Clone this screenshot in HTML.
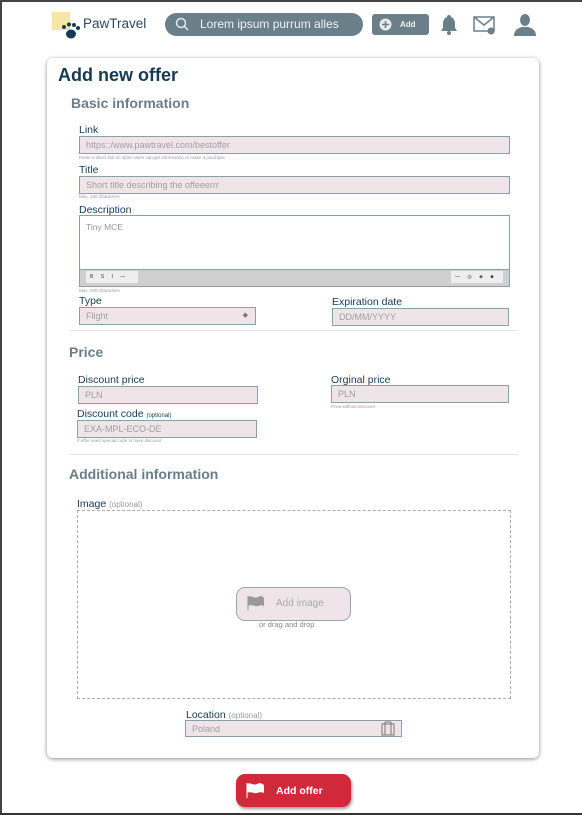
<!DOCTYPE html>
<html><head><meta charset="utf-8"><style>
*{box-sizing:border-box;margin:0;padding:0}
body{width:582px;height:815px;background:#fff;font-family:"Liberation Sans",sans-serif;position:relative;overflow:hidden}
.a{position:absolute}
.lbl{position:absolute;font-size:10.5px;color:#173a52}
.in{position:absolute;background:#efe5e8;border:1px solid #8d9eab;font-size:9px;color:#a0a0a0;padding:2px 6px;line-height:12px}
.hint{position:absolute;font-size:4.5px;color:#999}
.h2{position:absolute;font-size:14px;color:#6b7d89;font-weight:bold}
.hr{position:absolute;height:1px;background:#e6e6e6}
.opt{font-size:6px;color:#173a52}
.opt2{font-size:8px;color:#999}
</style></head><body>
<div class="a" style="left:0;top:0;width:582px;height:2px;background:#444"></div>
<div class="a" style="left:0;top:0;width:2px;height:815px;background:#444"></div>
<div class="a" style="left:0;top:813px;width:582px;height:2px;background:#333"></div>
<!-- header -->
<div class="a" style="left:52px;top:12px;width:18px;height:18px;background:#f5e2a0;opacity:.9"></div>
<svg class="a" style="left:60px;top:22px" width="22" height="18" viewBox="0 0 22 18"><g fill="#173a52"><circle cx="4" cy="5" r="2"/><circle cx="9" cy="2.5" r="2"/><circle cx="14" cy="3" r="2"/><circle cx="18" cy="6" r="2"/><ellipse cx="11" cy="12" rx="5" ry="4.5"/></g></svg>
<div class="a" style="left:83px;top:16px;font-size:13.5px;color:#2d4a5e">PawTravel</div>
<div class="a" style="left:165px;top:13px;width:198px;height:23px;border-radius:12px;background:#6b7f8b"></div>
<svg class="a" style="left:175px;top:17px" width="14" height="14" viewBox="0 0 14 14"><circle cx="6" cy="6" r="4.5" fill="none" stroke="#e8eef2" stroke-width="1.4"/><path d="M9.3 9.3L13 13" stroke="#e8eef2" stroke-width="1.4"/></svg>
<div class="a" style="left:200px;top:17px;font-size:12px;color:#eef2f5">Lorem ipsum purrum alles</div>
<div class="a" style="left:372px;top:14px;width:57px;height:21px;border-radius:3px;background:#6b7f8b"></div>
<svg class="a" style="left:379px;top:18px" width="13" height="13"><circle cx="6.5" cy="6.5" r="6" fill="#e8e8e8"/><path d="M6.5 3v7M3 6.5h7" stroke="#6b7f8b" stroke-width="1.6"/></svg>
<div class="a" style="left:400px;top:20px;font-size:8px;color:#eee;font-weight:bold">Add</div>
<svg class="a" style="left:440px;top:14px" width="18" height="21" viewBox="0 0 18 21"><path d="M9 1a2 2 0 0 1 2 2c3 1 4 4 4 7v4l2 3H1l2-3v-4c0-3 1-6 4-7a2 2 0 0 1 2-2z" fill="#6b7f8b"/><circle cx="9" cy="19" r="2" fill="#6b7f8b"/></svg>
<svg class="a" style="left:473px;top:16px" width="23" height="20" viewBox="0 0 23 20"><rect x="1" y="1" width="20" height="14" fill="none" stroke="#6b7f8b" stroke-width="1.5"/><path d="M1 1l10 8 10-8" fill="none" stroke="#6b7f8b" stroke-width="1.5"/><circle cx="18" cy="15" r="3.5" fill="#6b7f8b"/></svg>
<svg class="a" style="left:514px;top:13px" width="22" height="23" viewBox="0 0 22 23"><ellipse cx="11" cy="7" rx="5" ry="6" fill="#6b7f8b"/><path d="M0 23c0-6 4-8 8-9h6c4 1 8 3 8 9z" fill="#6b7f8b"/></svg>

<!-- card -->
<div class="a" style="left:47px;top:58px;width:492px;height:700px;border-radius:6px;background:#fff;box-shadow:0 1px 4px rgba(0,0,0,.45)"></div>
<div class="a" style="left:58px;top:65px;font-size:18px;color:#173a52;font-weight:bold">Add new offer</div>
<div class="h2" style="left:71px;top:95px">Basic information</div>

<div class="lbl" style="left:79px;top:124px">Link</div>
<div class="in" style="left:79px;top:136px;width:431px;height:18px">https::/www.pawtravel.com/bestoffer</div>
<div class="hint" style="left:79px;top:155px">Paste a direct link so other users can get information or make a purchase</div>
<div class="lbl" style="left:79px;top:164px">Title</div>
<div class="in" style="left:79px;top:176px;width:431px;height:18px">Short title describing the offeeerrr</div>
<div class="hint" style="left:79px;top:194px">Max. 150 characters</div>
<div class="lbl" style="left:79px;top:204px">Description</div>
<div class="a" style="left:79px;top:215px;width:431px;height:72px;border:1px solid #8d9eab;background:#fff"></div>
<div class="a" style="left:86px;top:222px;font-size:8.5px;color:#999">Tiny MCE</div>
<div class="a" style="left:80px;top:269px;width:429px;height:17px;background:#cfcfcf;border-top:1px solid #8d9eab"></div>
<div class="a" style="left:86px;top:271px;width:52px;height:12px;background:#eee;font-size:5px;color:#333;line-height:12px;word-spacing:6px;padding-left:4px">B S I —</div>
<div class="a" style="left:451px;top:271px;width:52px;height:12px;background:#eee;font-size:5px;color:#333;line-height:12px;word-spacing:6px;padding-left:4px">— ◎ ◈ ■</div>
<div class="hint" style="left:79px;top:288px">Max. 300 characters</div>
<div class="lbl" style="left:79px;top:295px">Type</div>
<div class="in" style="left:79px;top:307px;width:177px;height:18px">Flight<span style="position:absolute;right:7px;font-size:7px;color:#777">◆</span></div>
<div class="lbl" style="left:332px;top:296px">Expiration date</div>
<div class="in" style="left:332px;top:308px;width:177px;height:18px">DD/MM/YYYY</div>
<div class="hr" style="left:69px;top:330px;width:449px"></div>

<div class="h2" style="left:69px;top:344px">Price</div>
<div class="lbl" style="left:78px;top:374px">Discount price</div>
<div class="in" style="left:78px;top:386px;width:180px;height:18px">PLN</div>
<div class="lbl" style="left:331px;top:374px">Orginal price</div>
<div class="in" style="left:331px;top:385px;width:178px;height:18px">PLN</div>
<div class="hint" style="left:331px;top:404px">Price without discount</div>
<div class="lbl" style="left:77px;top:408px">Discount code <span class="opt">(optional)</span></div>
<div class="in" style="left:77px;top:420px;width:180px;height:18px">EXA-MPL-ECO-DE</div>
<div class="hint" style="left:77px;top:438px">If offer need special code to have discount</div>
<div class="hr" style="left:69px;top:454px;width:449px"></div>

<div class="h2" style="left:69px;top:466px">Additional information</div>
<div class="lbl" style="left:77px;top:498px">Image <span class="opt2">(optional)</span></div>
<div class="a" style="left:77px;top:510px;width:434px;height:189px;border:1px dashed #aaa"></div>
<div class="a" style="left:236px;top:587px;width:115px;height:34px;border-radius:9px;background:#efe5e8;border:1px solid #9aa6b0"></div>
<svg class="a" style="left:247px;top:596px" width="18" height="14" viewBox="0 0 18 14"><path d="M1 0v14" stroke="#999" stroke-width="1"/><path d="M1 1c4-2 6 2 10 0s5 0 6 1v8c-2-1-4-1-6 0s-6-2-10 0z" fill="#999"/></svg>
<div class="a" style="left:276px;top:598px;font-size:10px;color:#aaa">Add image</div>
<div class="a" style="left:259px;top:620px;font-size:7.5px;color:#888">or drag and drop</div>

<div class="lbl" style="left:186px;top:709px">Location <span class="opt2">(optional)</span></div>
<div class="in" style="left:185px;top:720px;width:217px;height:17px">Poland</div>
<svg class="a" style="left:381px;top:721px" width="14" height="15" viewBox="0 0 14 15"><rect x="1" y="3" width="12" height="11" fill="none" stroke="#777"/><path d="M4 1v13M10 1v13M4 1h6" fill="none" stroke="#777"/></svg>

<div class="a" style="left:236px;top:774px;width:115px;height:33px;border-radius:9px;background:#d0293a;box-shadow:1px 2px 3px rgba(0,0,0,.4)"></div>
<svg class="a" style="left:246px;top:783px" width="19" height="15" viewBox="0 0 19 15"><path d="M1 0v15" stroke="#fff"/><path d="M1 1c4-2 6 2 10 0s5 0 7 1v8c-2-1-4-1-7 0s-6-2-10 0z" fill="#fff"/></svg>
<div class="a" style="left:276px;top:785px;font-size:10.5px;color:#fff;font-weight:bold">Add offer</div>
</body></html>
